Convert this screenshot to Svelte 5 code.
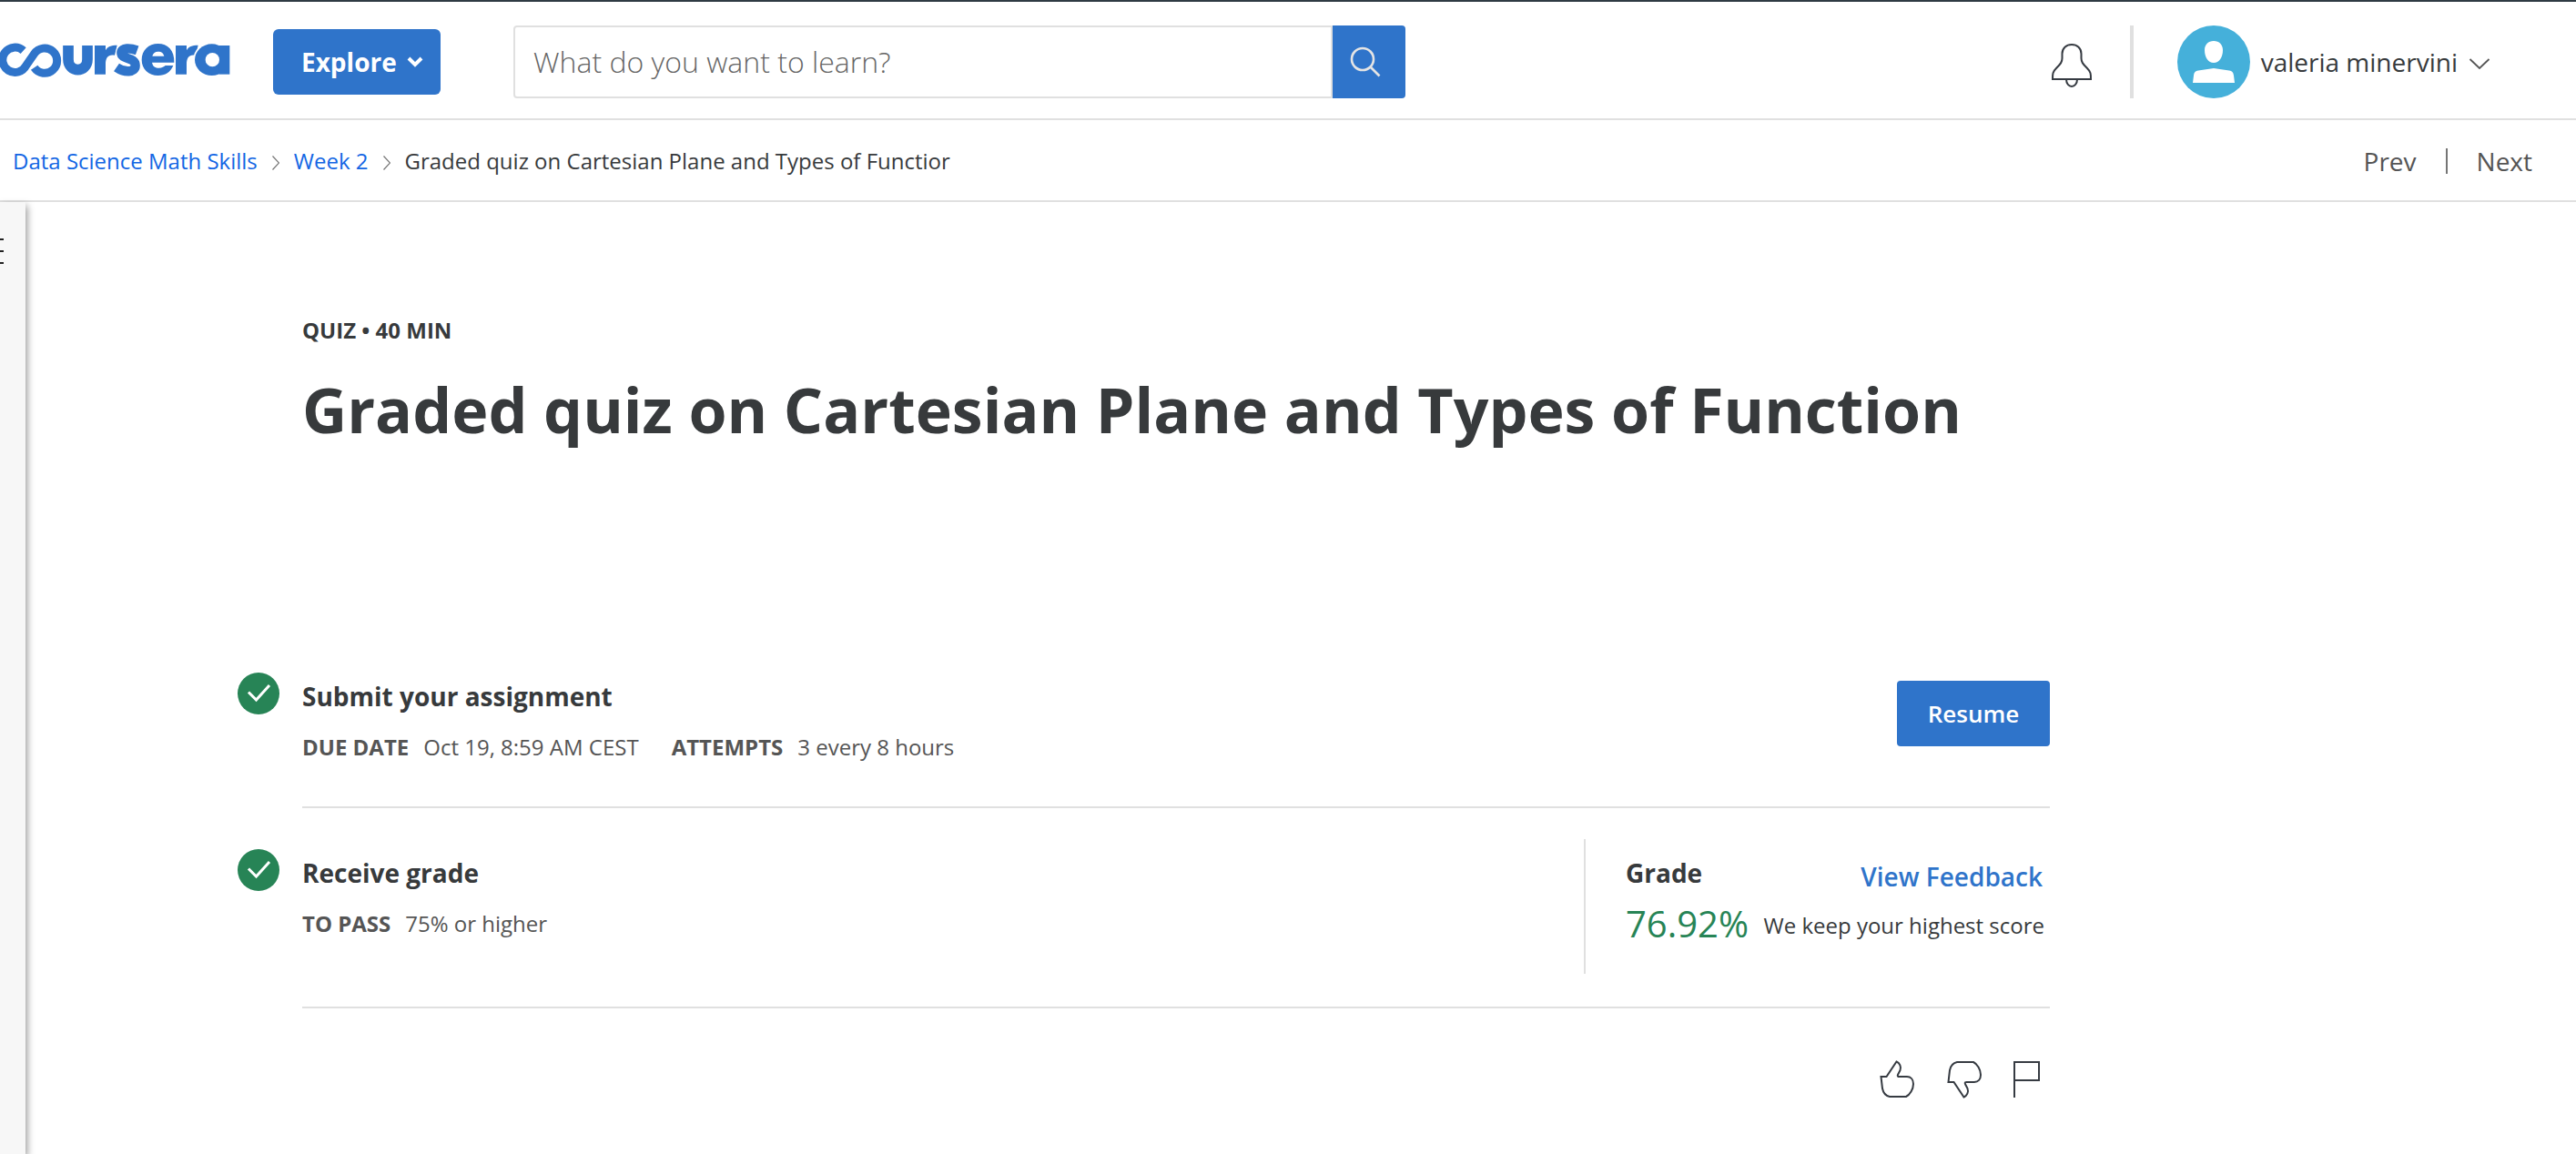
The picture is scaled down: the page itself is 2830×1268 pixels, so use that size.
<script>
  const crumbs = ['Data Science Math Skills', 'Week 2'];
  const current = 'Graded quiz on Cartesian Plane and Types of Functior';
  const title = 'Graded quiz on Cartesian Plane and Types of Function';
  let query = $state('');
</script>

{#snippet check()}
  <svg class="check" viewBox="0 0 46 46" aria-hidden="true">
    <circle cx="23" cy="23" r="23" fill="#278456" />
    <path d="M12 21.500 L20.500 30 L35 14" fill="none" stroke="#fff" stroke-width="3" />
  </svg>
{/snippet}

<div class="page">
  <header>
    <a class="brand" href="#home" aria-label="Coursera">
      <svg class="logo" viewBox="0 30 759 120" aria-hidden="true">
        <g fill="none" stroke="#2f74ca">
          <path d="M77 59 A41 41 0 1 0 86 108 L113 69 A41 41 0 1 1 113 115" stroke-width="27" />
          <path d="M225 42 V88 C225 133 288 133 288 88 V42" stroke-width="35" />
        </g>
        <g fill="#2f74ca">
          <path d="M312 42 H348 V58 C354 46 366 41 386 41 L378 74 C358 70 348 80 348 104 V137 H312 Z" />
          <path d="M579 42 H615 V58 C621 46 633 41 653 41 L645 74 C625 70 615 80 615 104 V137 H579 Z" />
          <path fill-rule="evenodd" d="M574 98 H501 C504 112 512 116 524 116 C534 116 540 112 545 108 H571 C562 130 545 141 521 141 C490 141 467 120 467 89 C467 58 490 36 521 36 C552 36 576 58 574 98 Z M502 77 H541 C538 66 532 62 521 62 C511 62 505 67 502 77 Z" />
        </g>
        <path d="M450 58 C430 50 400 48 400 66 C400 90 446 78 446 108 C446 132 410 132 384 116" fill="none" stroke="#fff" stroke-width="37" />
        <path d="M452 58 C430 50 400 48 400 66 C400 90 446 78 446 108 C446 132 410 132 384 114" fill="none" stroke="#2f74ca" stroke-width="31" />
        <ellipse cx="698" cy="89" rx="61" ry="58" fill="#fff" />
        <ellipse cx="698" cy="89" rx="56" ry="52" fill="#2f74ca" />
        <path d="M722 42 H757 V137 H722 Z" fill="#2f74ca" />
        <circle cx="700" cy="89" r="23" fill="#fff" />
      </svg>
    </a>
    <button class="explore">
      Explore
      <svg viewBox="0 0 18 12" aria-hidden="true"><path d="M2 2 L9 9 L16 2" fill="none" stroke="#fff" stroke-width="4" /></svg>
    </button>
    <form class="search" role="search" onsubmit={(e) => e.preventDefault()}>
      <input type="text" aria-label="Search" placeholder="What do you want to learn?" bind:value={query} />
      <button aria-label="Search">
        <svg viewBox="0 0 34 34" fill="none" stroke="#e4e4e4" stroke-width="2.600" aria-hidden="true">
          <circle cx="14" cy="14" r="12" /><path d="M22.500 22.500 L32.500 32.500" />
        </svg>
      </button>
    </form>
    <div class="account">
      <button class="bell" aria-label="Notifications">
        <svg viewBox="0 0 44 48" fill="none" stroke="#363b42" stroke-width="2" aria-hidden="true">
          <path d="M1 39 H43 C43 33 43 31 39 27 C34 22 32.500 20 32.500 16 V11 C32.500 5 28 1 22 1 C16 1 11.500 5 11.500 11 V16 C11.500 20 10 22 5 27 C1 31 1 33 1 39 Z M16 39 C16 49.500 28 49.500 28 39" />
        </svg>
      </button>
      <button class="user">
        <svg class="avatar" viewBox="0 0 80 80" aria-hidden="true">
          <circle cx="40" cy="40" r="40" fill="#45b0da" />
          <path d="M40 17 C46 17 50 21 50 27 C50 35 46 41 40 41 C34 41 30 35 30 27 C30 21 34 17 40 17 Z M17 63 L18 55 C18.500 51 20 50 23 49.500 L40 47 L57 49.500 C60 50 61.500 51 62 55 L63 63 Z" fill="#fff" />
        </svg>
        <span>valeria minervini</span>
        <svg class="caret" viewBox="0 0 24 12" aria-hidden="true"><path d="M1.500 1 L12 11 L22.500 1" fill="none" stroke="#555" stroke-width="1.800" /></svg>
      </button>
    </div>
  </header>

  <div class="subbar">
    <nav class="crumbs" aria-label="Breadcrumb">
      {#each crumbs as c}
        <a href="#course">{c}</a>
        <svg viewBox="0 0 8 16" aria-hidden="true"><path d="M0.500 0.500 L7.500 8 L0.500 15.500" fill="none" stroke="#757575" stroke-width="1.200" /></svg>
      {/each}
      <span class="here">{current}</span>
    </nav>
    <nav class="pager" aria-label="Items">
      <a href="#prev">Prev</a>
      <a href="#next">Next</a>
    </nav>
  </div>

  <div class="body">
    <aside>
      <button aria-label="Open menu"><i></i><i></i><i></i></button>
    </aside>
    <main>
      <p class="kind">QUIZ • 40 MIN</p>
      <h1>{title}</h1>

      <section class="submit">
        {@render check()}
        <div class="info">
          <h2>Submit your assignment</h2>
          <p><b>DUE DATE</b><span>Oct 19, 8:59 AM CEST</span><b>ATTEMPTS</b><span>3 every 8 hours</span></p>
        </div>
        <button class="resume">Resume</button>
      </section>

      <section class="receive">
        {@render check()}
        <div class="info">
          <h2>Receive grade</h2>
          <p><b>TO PASS</b><span>75% or higher</span></p>
        </div>
        <div class="grade">
          <div class="top">
            <h2>Grade</h2>
            <a href="#feedback">View Feedback</a>
          </div>
          <div class="score"><strong>76.92%</strong><span>We keep your highest score</span></div>
        </div>
      </section>

      <div class="actions">
        <button aria-label="Like">
          <svg viewBox="0 0 40 42"><path d="M2.500 18 H8.500 L19.500 1.500 C23 3 25 7 23.500 11 C21.500 15 19 18 22.500 18 H31 C35 18 38 21 38 26 C38 32 34 38 30 40 H12 C7 39 5 36 4 31 Z" /></svg>
        </button>
        <button aria-label="Dislike">
          <svg viewBox="0 0 40 42"><path d="M2.500 24 H8.500 L19.500 40.500 C23 39 25 35 23.500 31 C21.500 27 19 24 22.500 24 H31 C35 24 38 21 38 16 C38 10 34 4 30 2 H12 C7 3 5 6 4 11 Z" /></svg>
        </button>
        <button aria-label="Flag">
          <svg viewBox="0 0 40 42"><path d="M1 41 V2 H28 V22 H1" /></svg>
        </button>
      </div>
    </main>
  </div>
</div>

<style>
  :global(body) { margin: 0; background: #fff; }
  :global(*) { box-sizing: border-box; }
  .page { min-height: 100vh; display: flex; flex-direction: column; overflow: hidden; font-family: "Open Sans", sans-serif; color: #373a3c; font-size: 24px; line-height: 36px; }
  button { border: 0; padding: 0; margin: 0; background: none; font: inherit; color: inherit; cursor: pointer; }
  a { text-decoration: none; color: inherit; }
  h1, h2, p { margin: 0; }
  svg { display: block; flex: none; }
  header { display: flex; align-items: center; height: 132px; padding: 4px 94px 0 0; border-top: 2px solid #2f3b43; border-bottom: 2px solid #e0e0e0; }
  .logo { width: 253px; height: 40px; }
  .brand { margin-bottom: 4px; }
  .explore { display: flex; align-items: center; justify-content: space-between; width: 184px; height: 72px; margin-left: 47px; padding: 0 19px 0 31px; border-radius: 6px; background: #2f74ca; color: #fff; font-size: 28px; font-weight: 700; }
  .explore svg { width: 18px; height: 12px; }
  .search { display: flex; height: 80px; width: 980px; margin-left: 80px; }
  .search input { flex: 1; min-width: 0; border: 2px solid #e0e0e0; border-radius: 4px 0 0 4px; padding: 0 20px 2px; font: 300 32px "Open Sans", sans-serif; color: #373a3c; outline: 0; }
  .search input::placeholder { color: #666; opacity: 1; }
  .search button { width: 80px; display: grid; place-items: center; padding-right: 8px; background: #2f74ca; border-radius: 0 4px 4px 0; }
  .search svg { width: 34px; height: 34px; }
  .account { margin-left: auto; display: flex; align-items: center; }
  .bell { padding-top: 8px; }
  .bell svg { width: 44px; height: 48px; }
  .user { display: flex; align-items: center; height: 80px; margin-left: 42px; padding-left: 48px; border-left: 4px solid #e0e0e0; font-size: 28px; }
  .avatar { width: 80px; height: 80px; margin-right: 12px; }
  .caret { width: 24px; height: 12px; margin: 4px 0 0 12px; }
  .subbar { display: flex; align-items: center; justify-content: space-between; height: 90px; padding: 2px 48px 0 14px; border-bottom: 2px solid #e0e0e0; }
  .crumbs { display: flex; align-items: center; gap: 16px; }
  .crumbs a { color: #1366e4; }
  .crumbs svg { width: 8px; height: 16px; margin-top: 4px; }
  .here { white-space: nowrap; }
  .pager { display: flex; align-items: center; font-size: 28px; color: #555; }
  .pager a { line-height: 28px; }
  .pager a + a { margin-left: 32px; padding-left: 32px; border-left: 2px solid #757575; }
  .body { flex: 1; display: flex; }
  aside { width: 28px; background: #f7f7f7; box-shadow: 2px 4px 8px rgba(0, 0, 0, 0.4); padding-top: 40px; }
  aside button { display: flex; flex-direction: column; gap: 11px; }
  aside i { width: 4px; height: 2px; background: #222; }
  main { flex: 1; max-width: 2224px; padding: 123px 0 0 304px; }
  .kind { font-weight: 700; }
  h1 { margin-top: 21px; font-size: 68px; line-height: 96px; font-weight: 700; }
  h2 { font-size: 28px; line-height: 40px; font-weight: 700; }
  section { display: flex; align-items: flex-start; border-bottom: 2px solid #e0e0e0; }
  .submit { margin-top: 210px; height: 180px; }
  .receive { height: 220px; }
  .check { width: 46px; height: 46px; margin-left: -71px; margin-right: 25px; }
  .info { flex: 1; padding-top: 6px; }
  .info p { display: flex; margin-top: 18px; color: #555; }
  .info b { font-weight: 700; margin-right: 16px; }
  .info span { margin-right: 36px; }
  .resume { width: 168px; height: 72px; margin-top: 40px; border-radius: 4px; background: #2f74ca; color: #fff; font-size: 26px; font-weight: 600; }
  .submit .check, .submit .info { margin-top: 31px; }
  .receive .check, .receive .info { margin-top: 45px; }
  .grade { height: 148px; width: 512px; margin-top: 34px; padding: 17px 6px 0 44px; border-left: 2px solid #e0e0e0; }
  .top { display: flex; justify-content: space-between; }
  .top a { margin-right: 2px; color: #2f74ca; font-size: 28px; line-height: 48px; font-weight: 600; }
  .score { display: flex; align-items: center; justify-content: space-between; white-space: nowrap; }
  .score span { padding-top: 4px; }
  .score strong { font-size: 40px; line-height: 56px; font-weight: 400; color: #278456; }
  .actions { display: flex; justify-content: flex-end; gap: 34px; padding-top: 57px; }
  .actions svg { width: 40px; height: 42px; fill: none; stroke: #363b42; stroke-width: 2; }
</style>
